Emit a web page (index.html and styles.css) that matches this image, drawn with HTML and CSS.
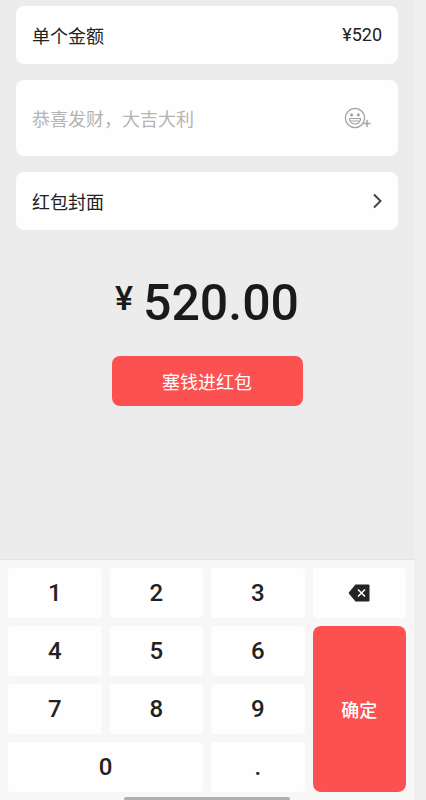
FILE: index.html
```
<!DOCTYPE html>
<html lang="zh-CN">
<head>
    <meta charset="UTF-8">
    <meta name="viewport" content="width=device-width, initial-scale=1">
    <title>发红包</title>
    <link rel="stylesheet" href="styles.css">
</head>
<body>
    <div class="app">
        <main class="content">
            <div class="card">
                <span>单个金额</span>
                <span class="card-value">¥520</span>
            </div>
            <div class="card card-message">
                <input class="message" type="text" placeholder="恭喜发财，大吉大利" aria-label="祝福语">
                <button class="emoji-button" type="button" aria-label="添加表情">
                    <svg width="28" height="24" viewBox="0 0 28 24" fill="none" stroke="#a2a2a2">
                        <circle cx="11" cy="12" r="9.6" stroke-width="1.3" />
                        <circle cx="7.6" cy="9" r="1.4" fill="#999" stroke="none" />
                        <circle cx="14.4" cy="9" r="1.4" fill="#999" stroke="none" />
                        <path d="M5.5 12.5h11c0 3.3-2.3 5.5-5.5 5.5s-5.5-2.2-5.5-5.5zM6.5 15h9" stroke-width="1.2" />
                        <path d="M23 14v7M20 17.5h6" stroke="#fefefe" stroke-width="4" />
                        <path d="M23 14v7M19.5 17.5h7" stroke-width="1.4" />
                    </svg>
                </button>
            </div>
            <a class="card" href="#">
                <span>红包封面</span>
                <svg width="10" height="16" viewBox="0 0 10 16" fill="none" stroke="#444" stroke-width="2">
                    <path d="M2 1.5l6.5 6.5L2 14.5" />
                </svg>
            </a>
            <p class="amount"><span class="currency">¥</span>520.00</p>
            <button class="send" type="button">塞钱进红包</button>
        </main>
        <div class="keyboard">
            <div class="keys">
                <button class="key" type="button">1</button>
                <button class="key" type="button">2</button>
                <button class="key" type="button">3</button>
                <button class="key" type="button" aria-label="删除">
                    <svg width="22" height="18" viewBox="0 0 22 18">
                        <path d="M7.500 0.500h13a1 1 0 0 1 1 1v15a1 1 0 0 1-1 1h-13L1 9.800a1.200 1.200 0 0 1 0-1.600z" fill="#252525" />
                        <path d="M10 5.500l7 7M17 5.500l-7 7" stroke="#fff" stroke-width="1.500" />
                    </svg>
                </button>
                <button class="key" type="button">4</button>
                <button class="key" type="button">5</button>
                <button class="key" type="button">6</button>
                <button class="key key-confirm" type="button">确定</button>
                <button class="key" type="button">7</button>
                <button class="key" type="button">8</button>
                <button class="key" type="button">9</button>
                <button class="key key-zero" type="button">0</button>
                <button class="key" type="button">.</button>
            </div>
            <div class="home-bar"></div>
        </div>
    </div>
</body>
</html>
```
FILE: styles.css
```
* {
    margin: 0;
    padding: 0;
    box-sizing: border-box;
}
body {
    font-family: "Noto Sans CJK SC", sans-serif;
    font-size: 18px;
    line-height: 24px;
    color: #222;
    background-color: #efefef;
}
button, input {
    font: inherit;
    border: none;
    background: none;
}
button {
    cursor: pointer;
}
svg {
    display: block;
}
.app {
    display: flex;
    flex-direction: column;
    min-height: 100vh;
    margin-right: 12px;
    background-color: #ececec;
}
.content {
    display: flex;
    flex-direction: column;
    flex: 1;
    gap: 16px;
    padding: 6px 16px 16px;
}
.card {
    display: flex;
    align-items: center;
    justify-content: space-between;
    min-height: 58px;
    padding: 0 16px;
    border-radius: 8px;
    background-color: #fefefe;
    color: inherit;
    text-decoration: none;
}
.card-value {
    font-family: Roboto, sans-serif;
}
.card-message {
    min-height: 76px;
    padding-right: 26px;
}
.message {
    flex: 1;
    min-width: 0;
    height: 40px;
    outline: none;
}
.message::placeholder {
    color: #b4b4b4;
    opacity: 1;
}
.amount {
    display: flex;
    justify-content: center;
    gap: 10px;
    margin-top: 24px;
    font-family: Roboto, sans-serif;
    font-size: 50px;
    font-weight: 500;
    line-height: 66px;
    color: #1a1a1a;
}
.currency {
    font-size: 34px;
    line-height: 56px;
}
.send {
    align-self: center;
    width: 50%;
    height: 50px;
    margin-top: 4px;
    border-radius: 8px;
    background-color: #fc5151;
    color: #fff;
}
.keyboard {
    border-top: 1px solid #e4e4e4;
    background-color: #f7f7f7;
}
.keys {
    display: grid;
    grid-template-columns: repeat(4, 1fr);
    grid-auto-rows: 50px;
    gap: 8px;
    padding: 8px 8px 5px;
}
.key {
    display: flex;
    align-items: center;
    justify-content: center;
    border-radius: 4px;
    background-color: #fefefe;
    color: #222;
    font-family: Roboto, sans-serif;
    font-size: 24px;
    font-weight: 500;
}
.key-zero {
    grid-column: span 2;
}
.key-confirm {
    grid-row: span 3;
    border-radius: 8px;
    background-color: #fc5151;
    color: #fff;
    font-family: "Noto Sans CJK SC", sans-serif;
    font-size: 18px;
}
.home-bar {
    width: 40%;
    height: 3px;
    margin: 0 auto;
    border-radius: 2px 2px 0 0;
    background-color: #b0b0b0;
}
```
